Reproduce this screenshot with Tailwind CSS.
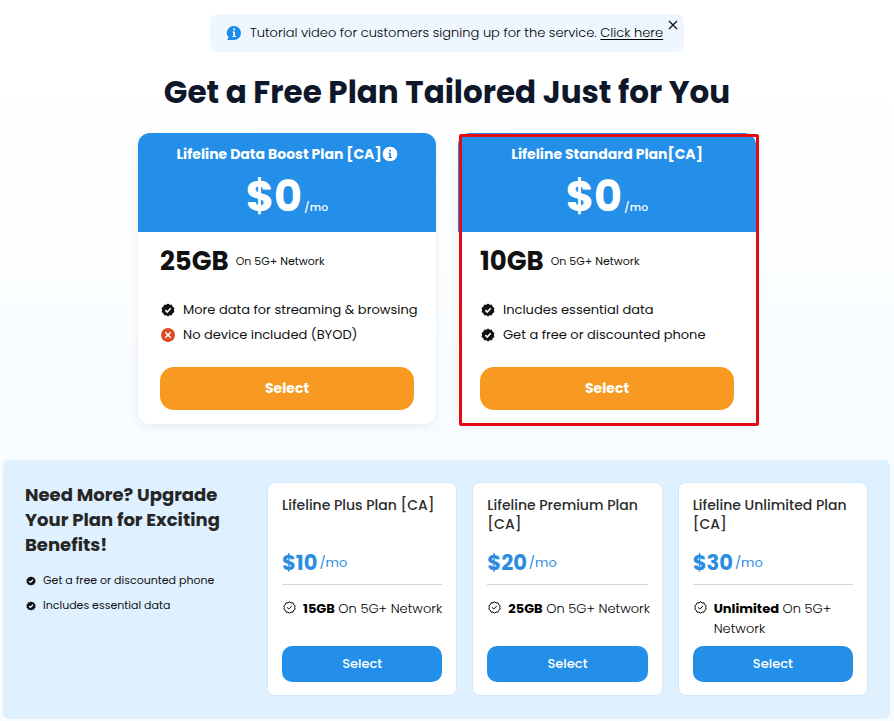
<!DOCTYPE html>
<html lang="en">
<head>
    <meta charset="UTF-8">
    <meta name="viewport" content="width=device-width, initial-scale=1.0">
    <title>Lifeline Plans</title>
    <script src="https://cdn.jsdelivr.net/npm/@tailwindcss/browser@4"></script>
</head>
<body class="min-h-screen bg-linear-to-b from-white from-10% to-[#f8fcff] to-60% font-[Poppins,Inter,sans-serif] text-[#111] pt-[14px]">
    <!-- Shared icons -->
    <svg class="hidden">
        <symbol id="badge" viewBox="0 0 24 24">
            <path fill="currentColor" d="M12 1l3 2.200 3.700-.3 1.300 3.400 3.100 2.200L22 12l1.100 3.500-3.100 2.200-1.300 3.400-3.700-.3L12 23l-3-2.200-3.700.3L4 17.700.9 15.500 2 12 .9 8.500 4 6.300l1.300-3.400 3.700.3z"/>
            <path fill="none" stroke="#fff" stroke-width="2.800" d="M7.500 12.300l3.200 3.200 6-6.500"/>
        </symbol>
        <symbol id="badge-outline" viewBox="0 0 24 24">
            <g fill="none" stroke="currentColor" stroke-width="1.800" stroke-linejoin="round" stroke-linecap="round">
                <path d="M12 1.500l2.900 2 3.500-.1 1.300 3.300 2.800 2.100-1 3.200 1 3.200-2.800 2.100-1.300 3.300-3.500-.1-2.900 2-2.900-2-3.500.1-1.300-3.300-2.800-2.100 1-3.200-1-3.200 2.800-2.100 1.300-3.300 3.500.1z"/>
                <path d="M8 12.200l2.800 2.600 5-5.200"/>
            </g>
        </symbol>
    </svg>

    <!-- Notice -->
    <div class="relative mx-auto flex h-[38px] w-[474px] max-w-full items-center gap-2 rounded-lg bg-[#eef7ff] pl-4 text-[13px] font-light text-black">
        <svg class="size-4 shrink-0" viewBox="0 0 16 16">
            <path fill="#1b8cea" d="M8 1a7 7 0 1 1 0 14H1.200l1.300-2.500A7 7 0 0 1 8 1z"/>
            <path fill="#fff" d="M6.500 6.500H9V11h1v1H6.300v-1h1V7.500h-.8zM7.200 3.500H9v1.700H7.200z"/>
        </svg>
        <p class="whitespace-nowrap">Tutorial video for customers signing up for the service. <a href="#" class="underline underline-offset-2">Click here</a></p>
        <button type="button" aria-label="Close" class="absolute top-[6px] right-[6px]">
            <svg class="size-[10px]" viewBox="0 0 10 10"><path d="M1 1l8 8M9 1L1 9" stroke="#111" stroke-width="1.300"/></svg>
        </button>
    </div>

    <h1 class="mt-[19px] text-center text-[31px] leading-[42px] font-bold text-[#0f172a]">Get a Free Plan Tailored Just for You</h1>

    <!-- Free plans -->
    <main class="mx-auto mt-5 grid max-w-[618px] grid-cols-2 gap-[22px]">
        <section class="overflow-hidden rounded-xl bg-white shadow-[0_2px_8px_rgba(15,40,80,0.08)]">
            <header class="h-[99px] bg-[#248fe9] pt-[11px] text-center text-white">
                <h2 class="flex items-center justify-center text-[14px] leading-5 font-bold whitespace-nowrap">Lifeline Data Boost Plan [CA]
                    <svg class="size-4" viewBox="0 0 16 16">
                        <circle cx="8" cy="8" r="7.300" fill="#fff"/>
                        <path fill="#248fe9" d="M6.300 6.800H9V11h1v1H6.300v-1h1V7.800h-1zM7.200 3.800H9v1.700H7.200z"/>
                    </svg>
                </h2>
                <p class="flex items-baseline justify-center gap-[2px] text-[43px] leading-[64px] font-bold">$0<span class="text-[11px] font-medium">/mo</span></p>
            </header>
            <div class="px-[22px] pt-3 pb-[14px]">
                <p class="flex items-center gap-[7px] text-[26px] leading-[34px] font-bold">25GB <span class="text-[11px] font-normal">On 5G+ Network</span></p>
                <ul class="mt-[19px] text-[13px] leading-[25px] whitespace-nowrap">
                    <li class="flex items-center gap-[7px]"><svg class="mx-px size-[14px] shrink-0"><use href="#badge"/></svg>More data for streaming &amp; browsing</li>
                    <li class="flex items-center gap-[7px]">
                        <svg class="mx-px size-[14px] shrink-0" viewBox="0 0 14 14"><circle cx="7" cy="7" r="7" fill="#dc4c23"/><path d="M4.300 4.300l5.400 5.400M9.700 4.300L4.300 9.700" stroke="#fff" stroke-width="1.500"/></svg>No device included (BYOD)
                    </li>
                </ul>
                <button type="button" class="mt-5 h-[43px] w-full rounded-[14px] bg-[#f89a22] text-[14px] font-bold text-white">Select</button>
            </div>
        </section>

        <section class="relative rounded-xl bg-white shadow-[0_2px_8px_rgba(15,40,80,0.08)]">
            <header class="h-[99px] rounded-t-xl bg-[#248fe9] pt-[11px] text-center text-white">
                <h2 class="text-[14px] leading-5 font-bold">Lifeline Standard Plan[CA]</h2>
                <p class="flex items-baseline justify-center gap-[2px] text-[43px] leading-[64px] font-bold">$0<span class="text-[11px] font-medium">/mo</span></p>
            </header>
            <div class="px-[22px] pt-3 pb-[14px]">
                <p class="flex items-center gap-[7px] text-[26px] leading-[34px] font-bold">10GB <span class="text-[11px] font-normal">On 5G+ Network</span></p>
                <ul class="mt-[19px] text-[13px] leading-[25px] whitespace-nowrap">
                    <li class="flex items-center gap-[7px]"><svg class="mx-px size-[14px] shrink-0"><use href="#badge"/></svg>Includes essential data</li>
                    <li class="flex items-center gap-[7px]"><svg class="mx-px size-[14px] shrink-0"><use href="#badge"/></svg>Get a free or discounted phone</li>
                </ul>
                <button type="button" class="mt-5 h-[43px] w-full rounded-[14px] bg-[#f89a22] text-[14px] font-bold text-white">Select</button>
            </div>
            <!-- Highlight frame -->
            <div class="pointer-events-none absolute top-px -right-[3px] -bottom-[2px] left-px rounded-xs border-3 border-[#e30b13]"></div>
        </section>
    </main>

    <!-- Upgrades -->
    <section class="mr-1 ml-[3px] mt-9 grid grid-cols-[227px_repeat(3,minmax(0,1fr))] gap-[15px] rounded-md bg-[#dff0ff] px-[22px] pt-[22px] pb-[23px]">
        <div>
            <h2 class="text-[18px] leading-[25px] font-bold text-[#262626]">Need More? Upgrade<br>Your Plan for Exciting<br>Benefits!</h2>
            <ul class="mt-[11px] text-[11px] leading-[25px]">
                <li class="flex items-center gap-[6px]"><svg class="mx-px size-[10px] shrink-0"><use href="#badge"/></svg>Get a free or discounted phone</li>
                <li class="flex items-center gap-[6px]"><svg class="mx-px size-[10px] shrink-0"><use href="#badge"/></svg>Includes essential data</li>
            </ul>
        </div>

        <article class="flex h-[214px] flex-col rounded-lg border border-[#d5e8f8] bg-white px-[14px] py-[13px]">
            <h3 class="h-[38px] text-[14px] leading-[19px] font-medium text-[#2b2b2b]">Lifeline Plus Plan [CA]</h3>
            <p class="mt-[15px] flex items-center gap-[2px] border-b border-[#d4d4d4] pb-[7px] text-[21px] leading-7 font-bold text-[#2b8de0]">$10<span class="text-[13px] font-normal">/mo</span></p>
            <p class="mt-[14px] flex gap-[6px] text-[13px] leading-5 font-light whitespace-nowrap text-black"><svg class="mx-px mt-[2px] size-[13px] shrink-0"><use href="#badge-outline"/></svg><span><b class="font-bold">15GB</b> On 5G+ Network</span></p>
            <button type="button" class="mt-auto h-9 shrink-0 rounded-[10px] bg-[#248fe9] text-[13px] font-medium text-white">Select</button>
        </article>

        <article class="flex h-[214px] flex-col rounded-lg border border-[#d5e8f8] bg-white px-[14px] py-[13px]">
            <h3 class="h-[38px] text-[14px] leading-[19px] font-medium text-[#2b2b2b]">Lifeline Premium Plan [CA]</h3>
            <p class="mt-[15px] flex items-center gap-[2px] border-b border-[#d4d4d4] pb-[7px] text-[21px] leading-7 font-bold text-[#2b8de0]">$20<span class="text-[13px] font-normal">/mo</span></p>
            <p class="mt-[14px] flex gap-[6px] text-[13px] leading-5 font-light whitespace-nowrap text-black"><svg class="mx-px mt-[2px] size-[13px] shrink-0"><use href="#badge-outline"/></svg><span><b class="font-bold">25GB</b> On 5G+ Network</span></p>
            <button type="button" class="mt-auto h-9 shrink-0 rounded-[10px] bg-[#248fe9] text-[13px] font-medium text-white">Select</button>
        </article>

        <article class="flex h-[214px] flex-col rounded-lg border border-[#d5e8f8] bg-white px-[14px] py-[13px]">
            <h3 class="h-[38px] text-[14px] leading-[19px] font-medium text-[#2b2b2b]">Lifeline Unlimited Plan [CA]</h3>
            <p class="mt-[15px] flex items-center gap-[2px] border-b border-[#d4d4d4] pb-[7px] text-[21px] leading-7 font-bold text-[#2b8de0]">$30<span class="text-[13px] font-normal">/mo</span></p>
            <p class="mt-[14px] flex gap-[6px] text-[13px] leading-5 font-light text-black"><svg class="mx-px mt-[2px] size-[13px] shrink-0"><use href="#badge-outline"/></svg><span><b class="font-bold">Unlimited</b> On 5G+ Network</span></p>
            <button type="button" class="mt-auto h-9 shrink-0 rounded-[10px] bg-[#248fe9] text-[13px] font-medium text-white">Select</button>
        </article>
    </section>
</body>
</html>
